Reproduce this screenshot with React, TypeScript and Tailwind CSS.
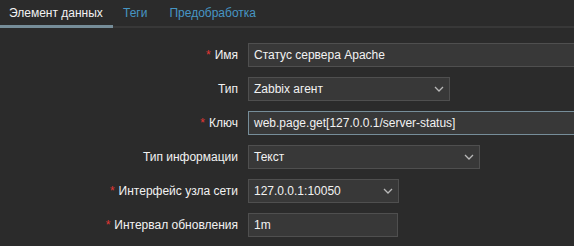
import React from "react";

const Chevron = () => (
  <svg width="10" height="6" viewBox="0 0 10 6" className="shrink-0">
    <path d="M1 1 L5 5 L9 1" fill="none" stroke="#b8b8b8" strokeWidth="1.3" />
  </svg>
);

const Label = ({ text, req }: { text: string; req?: boolean }) => (
  <div className="flex h-[24px] items-center justify-end pr-[10px] text-[12px] text-[#f2f2f2]">
    {req && <span className="mr-[4px] text-[#e33734]">*</span>}
    <span>{text}</span>
  </div>
);

const Input = ({ value, w, focus }: { value: string; w: string; focus?: boolean }) => (
  <div
    className={`flex h-[24px] items-center border bg-[#383838] px-[5px] text-[12px] text-[#f2f2f2] ${w} ${
      focus ? "border-[#768d99]" : "border-[#4f4f4f]"
    }`}
  >
    <span className="whitespace-nowrap">{value}</span>
  </div>
);

const Select = ({ value, w }: { value: string; w: string }) => (
  <div
    className={`flex h-[24px] items-center justify-between border border-[#4f4f4f] bg-[#383838] pl-[5px] pr-[5px] text-[12px] text-[#f2f2f2] ${w}`}
  >
    <span className="whitespace-nowrap">{value}</span>
    <Chevron />
  </div>
);

export default function App() {
  return (
    <div
      className="h-[246px] w-[574px] overflow-hidden bg-[#2b2b2b]"
      style={{ fontFamily: '"Liberation Sans", Arial, sans-serif' }}
    >
      <div className="flex h-[28px] border-b-2 border-[#383838] text-[12px]">
        <div className="relative flex h-[26px] w-[113px] items-center pl-[9px] text-[#f2f2f2]">
          Элемент данных
          <div className="absolute bottom-[-2px] left-0 h-[3px] w-[113px] bg-[#768d99]" />
        </div>
        <div className="flex h-[26px] items-center pl-[10px] text-[#4796c4]">Теги</div>
        <div className="flex h-[26px] items-center pl-[22px] text-[#4796c4]">Предобработка</div>
      </div>
      <div className="grid grid-cols-[248px_1fr] gap-y-[10px] pt-[15px]">
        <Label text="Имя" req />
        <Input value="Статус сервера Apache" w="w-[453px] shrink-0" />
        <Label text="Тип" />
        <Select value="Zabbix агент" w="w-[202px]" />
        <Label text="Ключ" req />
        <Input value="web.page.get[127.0.0.1/server-status]" w="w-[453px] shrink-0" focus />
        <Label text="Тип информации" />
        <Select value="Текст" w="w-[232px]" />
        <Label text="Интерфейс узла сети" req />
        <Select value="127.0.0.1:10050" w="w-[151px]" />
        <Label text="Интервал обновления" req />
        <Input value="1m" w="w-[150px]" />
      </div>
    </div>
  );
}
